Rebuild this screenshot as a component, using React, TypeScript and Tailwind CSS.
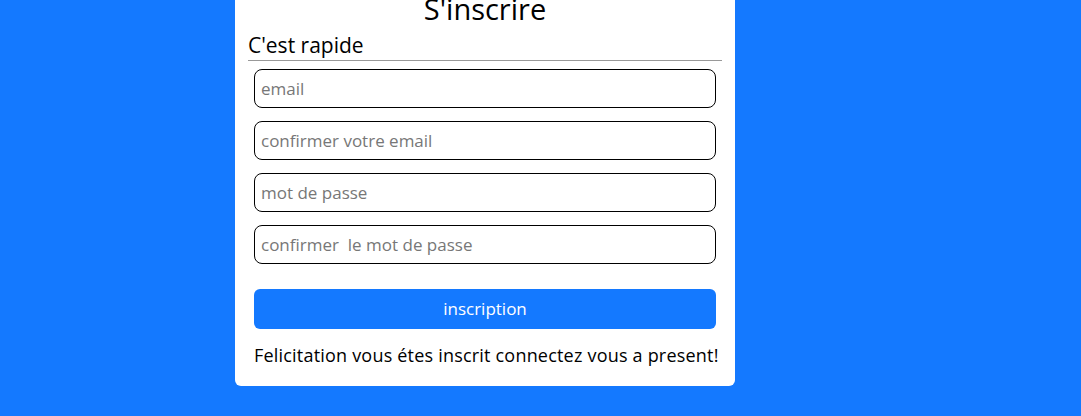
import React from "react";

export default function App() {
  const fields = ["email", "confirmer votre email", "mot de passe", "confirmer  le mot de passe"];
  return (
    <div className="h-[416px] w-full overflow-hidden bg-[#1479ff] flex" style={{ fontFamily: '"Open Sans", sans-serif' }}>
      <div className="w-[500px] h-[397px] ml-[235px] mt-[-11px] bg-white rounded-[6px] px-[13px] flex flex-col">
        <h1 className="h-[40px] text-center text-[29px] leading-[40px] text-black">S'inscrire</h1>
        <h2 className="h-[24px] mt-[4px] text-[21px] leading-[24px] text-black">C'est rapide</h2>
        <div className="mt-[3px] h-px bg-[#999999]" />
        <form className="px-[6px] pt-[8px] flex flex-col gap-[13px]" onSubmit={(e) => e.preventDefault()}>
          {fields.map((f) => (
            <input
              key={f}
              placeholder={f}
              className="h-[39px] w-full rounded-[8px] border border-black px-[6px] text-[17px] text-black placeholder:text-[#777777] outline-none"
            />
          ))}
          <button className="mt-[12px] h-[40px] w-full rounded-[6px] bg-[#1479ff] text-white text-[17px]">inscription</button>
          <p className="text-[18px] leading-[27px] tracking-[0.2px] text-black whitespace-nowrap">Felicitation vous étes inscrit connectez vous a present!</p>
        </form>
      </div>
    </div>
  );
}
